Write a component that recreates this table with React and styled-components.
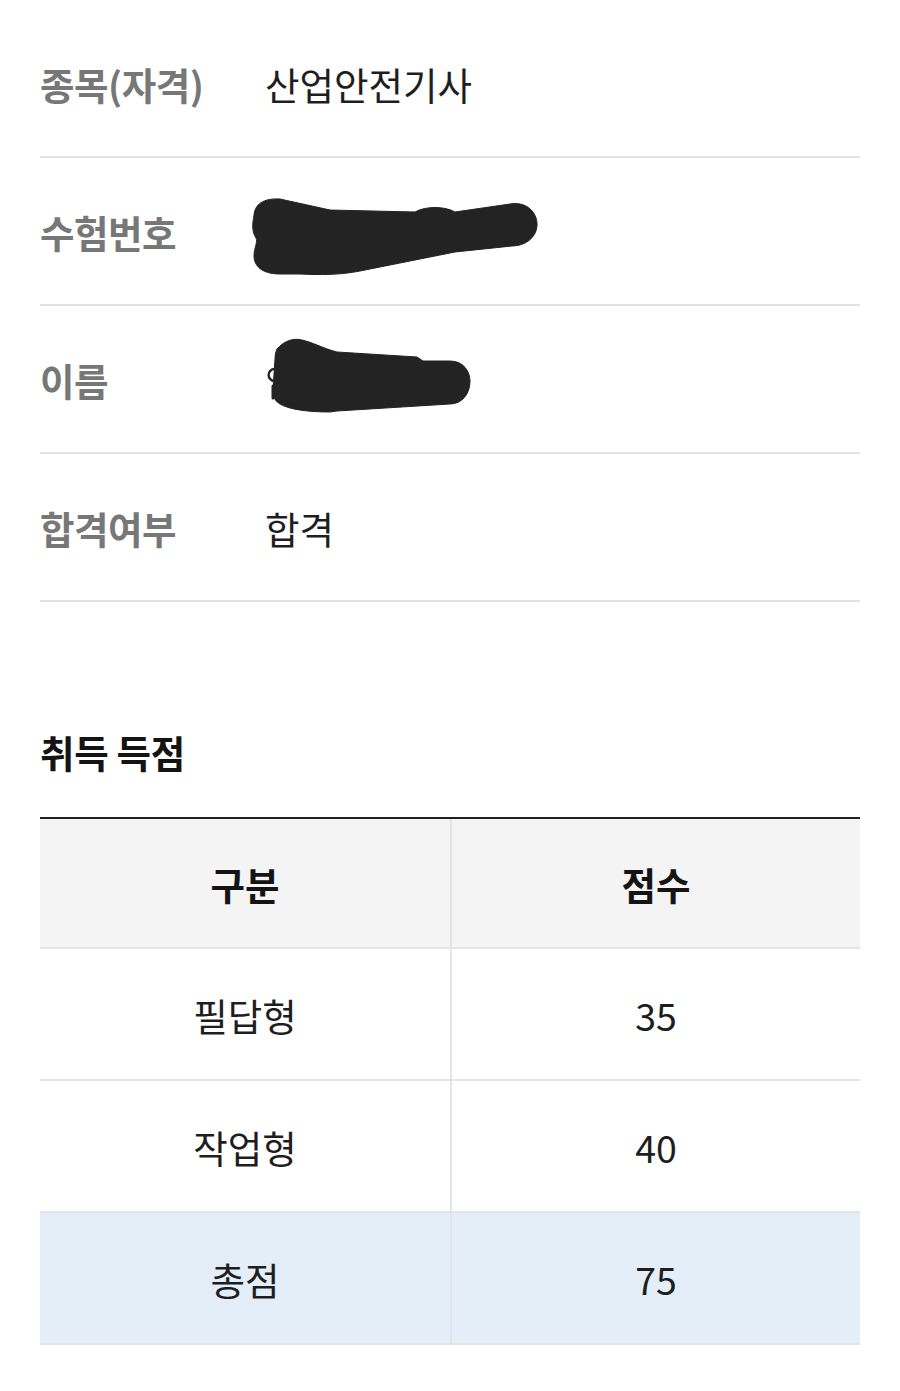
import React from "react";
import styled, { createGlobalStyle } from "styled-components";

const Global = createGlobalStyle`
  html, body { margin: 0; padding: 0; background: #fff; }
  body { font-family: "Noto Sans CJK KR", "Noto Sans", sans-serif; color: #222; }
`;

const Page = styled.div`
  padding: 10px 40px 40px;
`;

const InfoList = styled.div`
  display: flex;
  flex-direction: column;
`;

const InfoRow = styled.div`
  box-sizing: border-box;
  height: 148px;
  display: flex;
  align-items: center;
  border-bottom: 2px solid #e2e2e2;
`;

const Label = styled.div`
  width: 225px;
  flex: none;
  font-size: 37.5px;
  font-weight: 700;
  color: #777;
  letter-spacing: -0.5px;
`;

const Value = styled.div`
  font-size: 37.5px;
  font-weight: 400;
  color: #1e1e1e;
  display: flex;
  align-items: center;
`;

const Redaction = styled.svg`
  display: block;
  margin-left: -25px;
  width: 300px;
  height: 90px;
`;

const Title = styled.h2`
  margin: 125px 0 0;
  height: 50px;
  line-height: 50px;
  font-size: 37.5px;
  font-weight: 700;
  color: #141414;
  letter-spacing: -0.3px;
`;

const Table = styled.div`
  margin-top: 40px;
  border-top: 2px solid #222;
  display: grid;
  grid-template-columns: 1fr 1fr;
`;

const Cell = styled.div`
  box-sizing: border-box;
  height: ${(p) => (p.$head ? 130 : 132)}px;
  display: flex;
  align-items: center;
  justify-content: center;
  font-size: 37.5px;
  font-weight: ${(p) => (p.$head ? 700 : 400)};
  color: ${(p) => (p.$head ? "#141414" : "#1e1e1e")};
  background: ${(p) => (p.$head ? "#f4f4f4" : p.$total ? "#e4eef9" : "#fff")};
  border-bottom: 2px solid #e4e4e4;
  border-left: ${(p) => (p.$second ? "2px solid #e4e4e4" : "none")};
`;

const Blob = ({ children }) => (
  <Redaction viewBox="0 0 300 90">
    <g fill="#232323" stroke="#232323" strokeLinecap="round" strokeLinejoin="round">
      {children}
    </g>
  </Redaction>
);

const rows = [
  ["필답형", "35"],
  ["작업형", "40"],
];

export default function App() {
  return (
    <>
      <Global />
      <Page>
        <InfoList>
          <InfoRow>
            <Label>종목(자격)</Label>
            <Value>산업안전기사</Value>
          </InfoRow>
          <InfoRow>
            <Label>수험번호</Label>
            <Value>
              <Blob>
                <path
                  strokeWidth="1"
                  d="M14 30 C14 18 24 12 40 13 L90 24 L175 26 C185 20 205 20 215 26 L270 18 C288 15 298 28 297 40 C296 52 285 60 272 60 L215 66 L120 85 C100 89 80 89 60 88 L40 88 C22 88 14 80 14 70 C14 62 18 56 16 52 C12 46 12 38 14 30 Z"
                />
              </Blob>
            </Value>
          </InfoRow>
          <InfoRow>
            <Label>이름</Label>
            <Value>
              <Blob>
                <path d="M38 36 A6 6 0 1 0 38 46" fill="none" strokeWidth="2.5" />
                <path d="M33 52 L33 64" fill="none" strokeWidth="3" />
                <path
                  strokeWidth="1"
                  d="M37 15 C45 6 54 4 62 6 C72 8 82 14 97 18 L177 23 L183 27 L210 27 C224 27 230 38 230 47 C230 60 222 70 210 70 L97 77 L90 78 C70 78 50 76 40 70 C33 66 33 60 33 55 L35 25 C35 20 36 17 37 15 Z"
                />
              </Blob>
            </Value>
          </InfoRow>
          <InfoRow>
            <Label>합격여부</Label>
            <Value>합격</Value>
          </InfoRow>
        </InfoList>

        <Title>취득 득점</Title>

        <Table>
          <Cell $head>구분</Cell>
          <Cell $head $second>점수</Cell>
          {rows.map(([k, v]) => (
            <React.Fragment key={k}>
              <Cell>{k}</Cell>
              <Cell $second>{v}</Cell>
            </React.Fragment>
          ))}
          <Cell $total>총점</Cell>
          <Cell $total $second>75</Cell>
        </Table>
      </Page>
    </>
  );
}
